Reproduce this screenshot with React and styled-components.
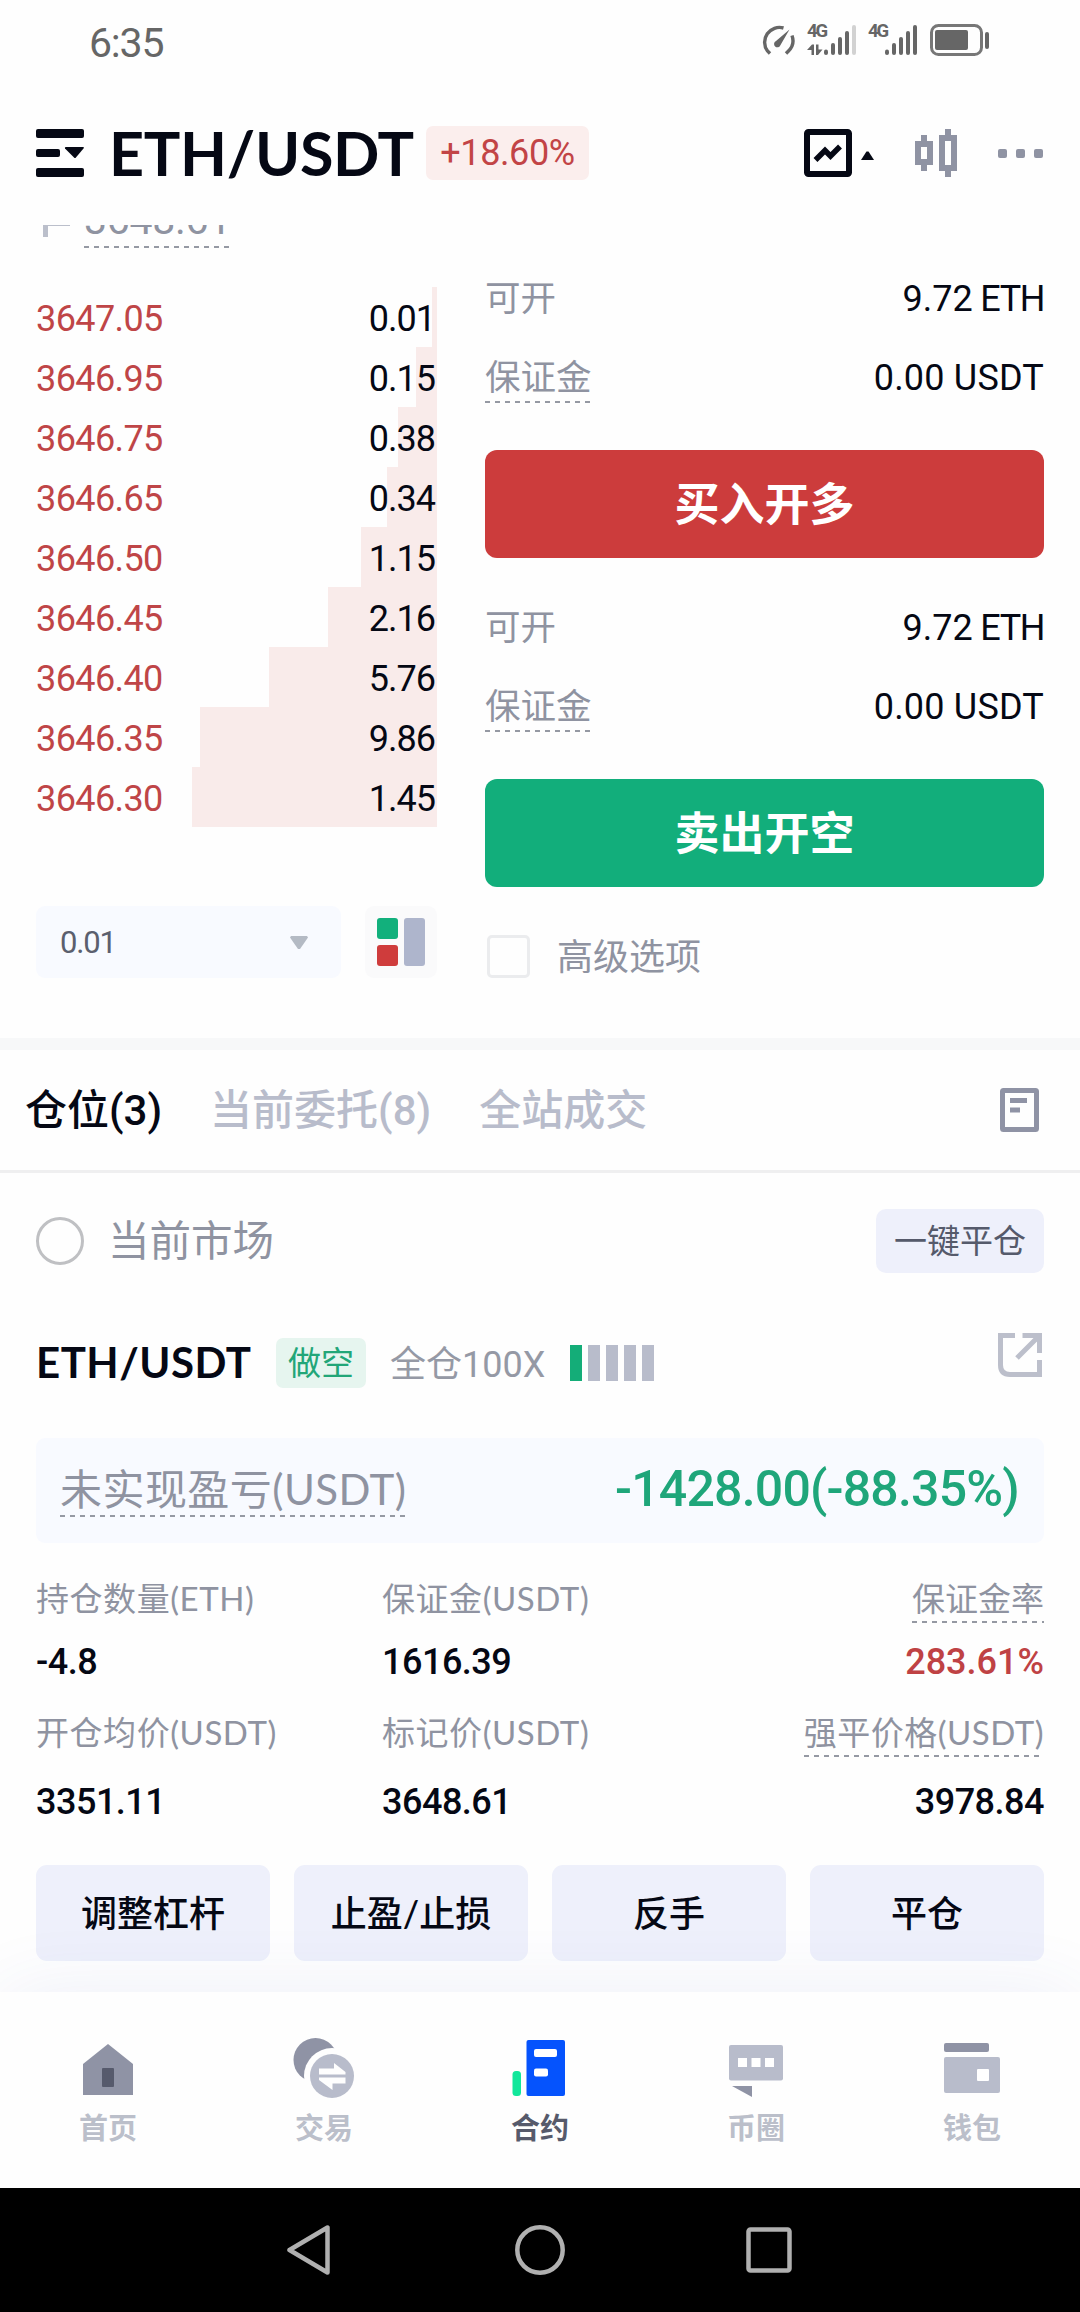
import React, { useState } from "react";
import styled, { createGlobalStyle } from "styled-components";

const GlobalStyle = createGlobalStyle`
  * {
    box-sizing: border-box;
  }

  body {
    margin: 0;
    background: #fefefe;
    font-family: Lato, "Noto Sans CJK SC", sans-serif;
    color: #050814;
  }

  button {
    border: 0;
    padding: 0;
    font-family: inherit;
    background: none;
    color: inherit;
  }

  svg {
    display: block;
    flex: none;
  }
`;

const Screen = styled.div`
  display: flex;
  flex-direction: column;
  width: 1080px;
  height: 2312px;
  overflow: hidden;
  background: #fefefe;
`;

const Num = styled.span`
  font-family: Roboto, "Noto Sans CJK SC", sans-serif;
  font-size: ${p => p.$size || 36}px;
  font-weight: ${p => p.$weight || 400};
  letter-spacing: ${p => p.$ls || 0}px;
  color: ${p => p.$color || "#050814"};
  white-space: nowrap;
`;

/* status bar */

const StatusBar = styled.div`
  display: flex;
  justify-content: space-between;
  align-items: center;
  height: 81px;
  padding: 5px 90px 0 89px;
`;

const StatusIcons = styled.div`
  display: flex;
  align-items: center;
  height: 30px;
  margin-bottom: 6px;
`;

const Signal = styled.div`
  display: flex;
  position: relative;
  width: 49px;
  height: 30px;
  margin-left: 12px;
`;

const Generation = styled.span`
  position: absolute;
  top: -3px;
  left: 0;
  font: 700 18.5px/19px Roboto, sans-serif;
  letter-spacing: -2px;
  color: #666;
`;

const Battery = styled.svg`
  margin-left: 13px;
`;

/* header */

const Header = styled.header`
  display: flex;
  align-items: center;
  height: 144px;
  padding: 0 36px;
`;

const Pair = styled.h1`
  margin: 0 0 0 25px;
  width: 317px;
  font-size: 61px;
  line-height: 64px;
  font-weight: 700;
  letter-spacing: -0.3px;
  white-space: nowrap;
`;

const Change = styled.div`
  display: flex;
  align-items: center;
  justify-content: center;
  width: 163px;
  height: 54px;
  border-radius: 7px;
  background: #fbeeed;
`;

const HeaderTools = styled.div`
  display: flex;
  align-items: center;
  gap: 41px;
  margin: 0 1px 0 auto;
`;

/* trade area */

const Content = styled.main`
  flex: 1;
  overflow: hidden;
`;

const TradeArea = styled.section`
  display: flex;
  gap: 48px;
  height: 813px;
  padding: 0 36px;
`;

const Book = styled.div`
  width: 401px;
`;

const MarkPrice = styled.div`
  display: flex;
  align-items: flex-end;
  height: 62px;
  padding: 0 0 39px 7px;
  overflow: hidden;
`;

const Flag = styled.svg`
  margin-bottom: 11px;
`;

const Dashed = styled.span`
  display: inline-flex;
  align-items: center;
  height: ${p => p.$height}px;
  background: repeating-linear-gradient(
      90deg,
      #9599a3 0 5px,
      transparent 5px 10px
    )
    0 100% / 100% 2px no-repeat;
`;

const BookRow = styled.div`
  display: flex;
  align-items: center;
  justify-content: space-between;
  height: 60px;
  padding: 4px 2px 0 0;
  background: linear-gradient(#f9ebea, #f9ebea) 100% 0 / ${p => p.$depth}px 100%
    no-repeat;
`;

const BookControls = styled.div`
  display: flex;
  justify-content: space-between;
  margin-top: 79px;
`;

const Precision = styled.button`
  display: flex;
  align-items: center;
  justify-content: space-between;
  width: 305px;
  height: 72px;
  padding: 0 33px 0 24px;
  border-radius: 9px;
  background: #f8faff;
`;

const LayoutButton = styled.button`
  display: flex;
  align-items: center;
  justify-content: center;
  width: 72px;
  height: 72px;
  border-radius: 9px;
  background: #fafafb;
`;

const Order = styled.div`
  width: 559px;
  padding-top: 4px;
`;

const OrderRow = styled.div`
  display: flex;
  align-items: center;
  justify-content: space-between;
  height: 79px;
  padding-top: 2px;
`;

const Label = styled.span`
  font-size: ${p => p.$size || 35.5}px;
  line-height: 1.3;
  letter-spacing: ${p => p.$ls || 0}px;
  color: #8f93a1;
  white-space: nowrap;
`;

const OrderButton = styled.button`
  display: block;
  width: 100%;
  height: 108px;
  margin-top: 34px;
  padding-bottom: 5px;
  border-radius: 12px;
  background: ${p => (p.$side === "buy" ? "#cc3c3c" : "#12ae7b")};
  font-size: 45px;
  font-weight: 700;
  color: #fff;
`;

const Side = styled.div`
  padding-top: 29px;
`;

const Advanced = styled.label`
  display: flex;
  align-items: center;
  gap: 27px;
  margin: 46px 0 0 2px;
`;

const Box = styled.i`
  width: 43px;
  height: 43px;
  border: 3px solid #ebecee;
  border-radius: 5px;
`;

/* positions */

const Divider = styled.div`
  height: 12px;
  background: #f7f8f9;
`;

const Tabs = styled.nav`
  display: flex;
  align-items: center;
  height: 123px;
  padding: 0 41px 3px 25px;
  border-bottom: 3px solid #efeff0;
`;

const Tab = styled.button`
  margin-right: ${p => p.$gap || 0}px;
  padding-bottom: 4px;
  font-family: Roboto, "Noto Sans CJK SC", sans-serif;
  font-size: 42px;
  font-weight: 500;
  color: ${p => (p.$active ? "#050814" : "#b8bccb")};
  white-space: nowrap;
`;

const TabIcon = styled.div`
  margin: 2px 0 0 auto;
`;

const Filter = styled.div`
  display: flex;
  align-items: center;
  height: 136px;
  padding: 0 36px;
`;

const Radio = styled.i`
  width: 48px;
  height: 48px;
  margin-right: 24px;
  border: 3px solid #bfc0c3;
  border-radius: 50%;
`;

const CloseAll = styled.button`
  width: 168px;
  height: 64px;
  margin-left: auto;
  padding-bottom: 4px;
  border-radius: 10px;
  background: #eef0fb;
  font-size: 33px;
  color: #555a6b;
`;

const PositionHead = styled.div`
  display: flex;
  align-items: center;
  height: 108px;
  padding: 0 36px;
`;

const PositionPair = styled.h2`
  width: 240px;
  margin: 0;
  padding-bottom: 3px;
  font-size: 42px;
  line-height: 50px;
  font-weight: 700;
  letter-spacing: 0.5px;
`;

const ShortTag = styled.span`
  width: 90px;
  height: 50px;
  margin-right: 24px;
  border-radius: 7px;
  background: #e6f5ef;
  font-size: 33px;
  line-height: 48px;
  text-align: center;
  color: #22a678;
`;

const Leverage = styled(Num)`
  width: 180px;
  padding-bottom: 5px;
`;

const Risk = styled.div`
  display: flex;
  gap: 6px;
`;

const RiskBar = styled.i`
  width: 12px;
  height: 36px;
  background: ${p => (p.$on ? "#14ad78" : "#b8bccb")};
`;

const Share = styled.div`
  margin: 0 2px 16px auto;
`;

const Pnl = styled.div`
  display: flex;
  align-items: center;
  justify-content: space-between;
  height: 105px;
  margin: 21px 36px 0;
  padding: 0 25px 3px 24px;
  border-radius: 9px;
  background: #f8faff;
`;

const Stats = styled.div`
  display: grid;
  grid-template-columns: 346px 330px 1fr;
  row-gap: 21px;
  margin: 30px 36px 0;
`;

const Stat = styled.div`
  display: flex;
  flex-direction: column;
  align-items: ${p => (p.$end ? "flex-end" : "flex-start")};
`;

const StatLabel = styled.span`
  display: flex;
  align-items: center;
  height: 50px;
`;

const StatValue = styled.div`
  display: flex;
  align-items: center;
  height: 50px;
  margin-top: ${p => (p.$low ? 19 : 13)}px;
  padding-top: 2px;
`;

const Actions = styled.div`
  display: grid;
  grid-template-columns: repeat(4, 1fr);
  gap: 24px;
  margin: 39px 36px 0;
`;

const Action = styled.button`
  height: 96px;
  padding-bottom: 5px;
  border-radius: 11px;
  background: #eef0fb;
  font-size: 36px;
  font-weight: 500;
`;

/* bottom */

const BottomNav = styled.nav`
  position: relative;
  display: grid;
  grid-template-columns: repeat(5, 1fr);
  height: 196px;
  padding-top: 44px;
  background: #fefefe;
  box-shadow: 0 0 80px -4px rgba(60, 80, 190, 0.09);
`;

const NavItem = styled.a`
  display: flex;
  flex-direction: column;
  align-items: center;
  gap: 8px;
  font-size: 29px;
  line-height: 40px;
  font-weight: 700;
  color: ${p => (p.$active ? "#565a6b" : "#bbbfca")};
`;

const SystemBar = styled.div`
  position: relative;
  display: flex;
  align-items: center;
  justify-content: center;
  gap: 180px;
  height: 124px;
  background: #000;
`;

const asks = [
  { price: "3647.05", size: "0.01", depth: 5 },
  { price: "3646.95", size: "0.15", depth: 21 },
  { price: "3646.75", size: "0.38", depth: 39 },
  { price: "3646.65", size: "0.34", depth: 50 },
  { price: "3646.50", size: "1.15", depth: 76 },
  { price: "3646.45", size: "2.16", depth: 109 },
  { price: "3646.40", size: "5.76", depth: 168 },
  { price: "3646.35", size: "9.86", depth: 237 },
  { price: "3646.30", size: "1.45", depth: 245 }
];

const stats = [
  { label: "持仓数量(ETH)", value: "-4.8" },
  { label: "保证金(USDT)", value: "1616.39" },
  { label: "保证金率", value: "283.61%", end: true, color: "#bf4244" },
  { label: "开仓均价(USDT)", value: "3351.11", low: true },
  { label: "标记价(USDT)", value: "3648.61", low: true },
  { label: "强平价格(USDT)", value: "3978.84", end: true, low: true }
];

const actions = ["调整杠杆", "止盈/止损", "反手", "平仓"];

const navItems = [
  {
    label: "首页",
    icon: (
      <>
        <path d="M36 8 61 28V59H11V28z" fill="#8f93a5" />
        <rect x="30" y="32" width="12" height="19" rx="1" fill="#565a6c" />
      </>
    )
  },
  {
    label: "交易",
    icon: (
      <>
        <circle cx="27.5" cy="24" r="22" fill="#8f93a5" />
        <circle cx="44" cy="40" r="28" fill="#fefefe" />
        <circle cx="44" cy="40" r="22" fill="#b8bccb" />
        <path
          d="M31 32.5H46V27L57.5 36V38.5H31zM31 41.5H57.5V47.5H44.5V54L31 44z"
          fill="#fefefe"
        />
      </>
    )
  },
  {
    label: "合约",
    icon: (
      <>
        <rect x="8.5" y="35" width="8.5" height="25" rx="3.5" fill="#12e79b" />
        <rect x="22.5" y="4" width="38.5" height="56" rx="2" fill="#0553fd" />
        <rect x="30" y="13" width="23" height="8" rx="2" fill="#fff" />
        <rect x="30" y="32.5" width="14" height="8" rx="2" fill="#fff" />
      </>
    )
  },
  {
    label: "币圈",
    icon: (
      <>
        <rect x="9" y="9" width="54" height="35.5" rx="2" fill="#b8bccb" />
        <path d="M18 22h9v9h-9zM31.5 22h9v9h-9zM45 22h9v9h-9z" fill="#fff" />
        <path d="M12 50H32V61z" fill="#8f93a5" />
      </>
    )
  },
  {
    label: "钱包",
    icon: (
      <>
        <rect x="8" y="7" width="45" height="9" rx="2" fill="#8f93a5" />
        <rect x="8" y="21" width="56" height="36" rx="2" fill="#b8bccb" />
        <rect x="41" y="33" width="12" height="12" rx="1" fill="#fff" />
      </>
    )
  }
];

const SignalBars = ({ weak }) => (
  <svg width="49" height="30" viewBox="0 0 49 30" fill="#666">
    {weak && <path d="M0 25 5 19.5H7V30H4.5V25zM9 19.5h2.5v5h4L11 30H9z" />}
    <rect x="17" y="24.5" width="4" height="5.5" rx="2" />
    <rect x="24" y="18" width="4" height="12" rx="2" />
    <rect x="31" y="12" width="4" height="18" rx="2" />
    <rect x="38" y="6" width="4" height="24" rx="2" />
    <rect
      x="45"
      y="0"
      width="4"
      height="30"
      rx="2"
      fill={weak ? "#d2d2d2" : "#666"}
    />
  </svg>
);

const OrderSide = ({ side, title }) => (
  <Side>
    <OrderRow>
      <Label>可开</Label>
      <span>
        <Num>9.72</Num>
        <Num $ls={-1.4}>&nbsp;ETH</Num>
      </span>
    </OrderRow>
    <OrderRow>
      <Dashed $height={50}>
        <Label>保证金</Label>
      </Dashed>
      <Num $ls={0.2}>0.00 USDT</Num>
    </OrderRow>
    <OrderButton $side={side}>{title}</OrderButton>
  </Side>
);

const App = () => {
  const [activeTab, setActiveTab] = useState(0);
  const tabs = [
    { title: "仓位(3)", gap: 48 },
    { title: "当前委托(8)", gap: 48 },
    { title: "全站成交" }
  ];

  return (
    <Screen>
      <GlobalStyle />
      <StatusBar>
        <Num $size={41} $ls={-1.2} $color="#666">
          6:35
        </Num>
        <StatusIcons>
          <svg
            width="34"
            height="30"
            viewBox="0 0 34 30"
            fill="none"
            stroke="#666"
            strokeWidth="3.4"
          >
            <path d="M9 28.5 6.5 26A14.8 14.8 0 0 1 22.5 3" />
            <path d="M31 10.5A14.8 14.8 0 0 1 27.5 26L25 28.5" />
            <path
              d="M28.5 4.5 15 16A3.3 3.3 0 1 0 19.5 20z"
              fill="#666"
              stroke="none"
            />
          </svg>
          <Signal>
            <Generation>4G</Generation>
            <SignalBars weak />
          </Signal>
          <Signal>
            <Generation>4G</Generation>
            <SignalBars />
          </Signal>
          <Battery width="60" height="32" viewBox="0 0 60 32">
            <rect
              x="1.5"
              y="1.5"
              width="50"
              height="29"
              rx="7"
              fill="none"
              stroke="#777"
              strokeWidth="3"
            />
            <rect x="5" y="6" width="33" height="20" rx="2" fill="#666" />
            <rect x="55" y="8" width="4" height="17" rx="2" fill="#666" />
          </Battery>
        </StatusIcons>
      </StatusBar>

      <Header>
        <svg width="48" height="48" viewBox="0 0 48 48" fill="#050814">
          <rect width="48" height="9" rx="2" />
          <rect y="20" width="24" height="8" rx="2" />
          <path d="M30 18h17q1.5 0 .5 1.5L39.5 29h-1L29 19.5Q28.5 18 30 18z" />
          <rect y="39" width="48" height="9" rx="2" />
        </svg>
        <Pair>ETH/USDT</Pair>
        <Change>
          <Num $ls={-0.4} $color="#c24446">
            +18.60%
          </Num>
        </Change>
        <HeaderTools>
          <svg width="70" height="48" viewBox="0 0 70 48">
            <rect
              x="3"
              y="3"
              width="42"
              height="42"
              rx="1.5"
              fill="none"
              stroke="#050814"
              strokeWidth="6"
            />
            <path
              d="M11.5 31 21 21.5l5.5 5.5 9.5-9.5"
              fill="none"
              stroke="#050814"
              strokeWidth="5.5"
            />
            <path d="M62.5 22.5h2L70 31H57z" fill="#050814" />
          </svg>
          <svg width="42" height="48" viewBox="0 0 42 48">
            <path
              d="M3 15h12v18H3zM9 6v9M9 33v9M27 9h12v30H27zM33 0v9M33 39v9"
              fill="none"
              stroke="#8f93a3"
              strokeWidth="6"
            />
          </svg>
          <svg width="45" height="9" viewBox="0 0 45 9" fill="#8f93a3">
            <rect width="9" height="9" rx="2" />
            <rect x="18" width="9" height="9" rx="2" />
            <rect x="36" width="9" height="9" rx="2" />
          </svg>
        </HeaderTools>
      </Header>

      <Content>
        <TradeArea>
          <Book>
            <MarkPrice>
              <Flag width="41" height="30" viewBox="0 0 41 30">
                <path d="M0 0h27v19H5v11H0z" fill="#bbbfcb" />
              </Flag>
              <Dashed $height={56}>
                <Num $size={41} $ls={-0.3} $color="#8f93a1">
                  3648.61
                </Num>
              </Dashed>
            </MarkPrice>
            {asks.map(ask => (
              <BookRow key={ask.price} $depth={ask.depth}>
                <Num $ls={-0.6} $color="#bf4547">
                  {ask.price}
                </Num>
                <Num $ls={-1}>{ask.size}</Num>
              </BookRow>
            ))}
            <BookControls>
              <Precision>
                <Num $size={31} $ls={-1.2} $color="#5b5f6e">
                  0.01
                </Num>
                <svg width="18" height="13" viewBox="0 0 18 13">
                  <path d="M1 0h16l1 1.5L10 13H8L0 1.5z" fill="#b4bac4" />
                </svg>
              </Precision>
              <LayoutButton>
                <svg width="48" height="48" viewBox="0 0 48 48">
                  <rect width="21" height="21" rx="3" fill="#12b07c" />
                  <rect y="27" width="21" height="21" rx="3" fill="#cf3c3c" />
                  <rect x="27" width="21" height="48" rx="3" fill="#aeb5cc" />
                </svg>
              </LayoutButton>
            </BookControls>
          </Book>

          <Order>
            <OrderSide side="buy" title="买入开多" />
            <OrderSide side="sell" title="卖出开空" />
            <Advanced>
              <Box />
              <Label $size={36}>高级选项</Label>
            </Advanced>
          </Order>
        </TradeArea>

        <Divider />

        <Tabs>
          {tabs.map((tab, i) => (
            <Tab
              key={tab.title}
              $gap={tab.gap}
              $active={i === activeTab}
              onClick={() => setActiveTab(i)}
            >
              {tab.title}
            </Tab>
          ))}
          <TabIcon>
            <svg width="39" height="44" viewBox="0 0 39 44">
              <rect
                x="2.5"
                y="2.5"
                width="34"
                height="39"
                rx="1"
                fill="none"
                stroke="#8f93a5"
                strokeWidth="5"
              />
              <path d="M10 10h17v5H10zM10 19.5h10v5H10z" fill="#8f93a5" />
            </svg>
          </TabIcon>
        </Tabs>

        <Filter>
          <Radio />
          <Label $size={41.5}>当前市场</Label>
          <CloseAll>一键平仓</CloseAll>
        </Filter>

        <PositionHead>
          <PositionPair>ETH/USDT</PositionPair>
          <ShortTag>做空</ShortTag>
          <Leverage $color="#9599a5">全仓100X</Leverage>
          <Risk>
            <RiskBar $on />
            <RiskBar />
            <RiskBar />
            <RiskBar />
            <RiskBar />
          </Risk>
          <Share>
            <svg
              width="44"
              height="44"
              viewBox="0 0 44 44"
              fill="none"
              stroke="#bcbfcb"
              strokeWidth="5"
            >
              <path d="M17 2.5H2.5V32q0 9.5 9.5 9.5H41.5V27" />
              <path d="M24.5 2.5h17V20M41 3 19 25" />
            </svg>
          </Share>
        </PositionHead>

        <Pnl>
          <Dashed $height={56}>
            <Label $size={42} $ls={0.45}>
              未实现盈亏(USDT)
            </Label>
          </Dashed>
          <Num $size={50} $weight={500} $ls={-0.8} $color="#1fa67a">
            -1428.00(-88.35%)
          </Num>
        </Pnl>

        <Stats>
          {stats.map(stat => (
            <Stat key={stat.label} $end={stat.end}>
              <StatLabel>
                {stat.end ? (
                  <Dashed $height={49}>
                    <Label $size={33} $ls={stat.low ? 0.5 : 0}>
                      {stat.label}
                    </Label>
                  </Dashed>
                ) : (
                  <Label $size={33} $ls={0.55}>
                    {stat.label}
                  </Label>
                )}
              </StatLabel>
              <StatValue $low={stat.low}>
                <Num
                  $weight={500}
                  $ls={stat.color ? 0 : -0.5}
                  $color={stat.color}
                >
                  {stat.value}
                </Num>
              </StatValue>
            </Stat>
          ))}
        </Stats>

        <Actions>
          {actions.map(action => (
            <Action key={action}>{action}</Action>
          ))}
        </Actions>
      </Content>

      <BottomNav>
        {navItems.map(item => (
          <NavItem key={item.label} $active={item.label === "合约"}>
            <svg width="72" height="64" viewBox="0 0 72 64">
              {item.icon}
            </svg>
            {item.label}
          </NavItem>
        ))}
      </BottomNav>

      <SystemBar>
        <svg
          width="50"
          height="50"
          viewBox="0 0 50 50"
          fill="none"
          stroke="#b0b0b0"
          strokeWidth="4.5"
          strokeLinejoin="round"
        >
          <path d="M42.5 2.5V47.5L4.5 25z" />
        </svg>
        <svg
          width="50"
          height="50"
          viewBox="0 0 50 50"
          fill="none"
          stroke="#b0b0b0"
          strokeWidth="4.5"
        >
          <circle cx="25" cy="25" r="22.7" />
        </svg>
        <svg
          width="50"
          height="50"
          viewBox="0 0 50 50"
          fill="none"
          stroke="#b0b0b0"
          strokeWidth="4.5"
        >
          <rect x="3.5" y="4.5" width="41" height="41" rx="2" />
        </svg>
      </SystemBar>
    </Screen>
  );
};

export default App;
